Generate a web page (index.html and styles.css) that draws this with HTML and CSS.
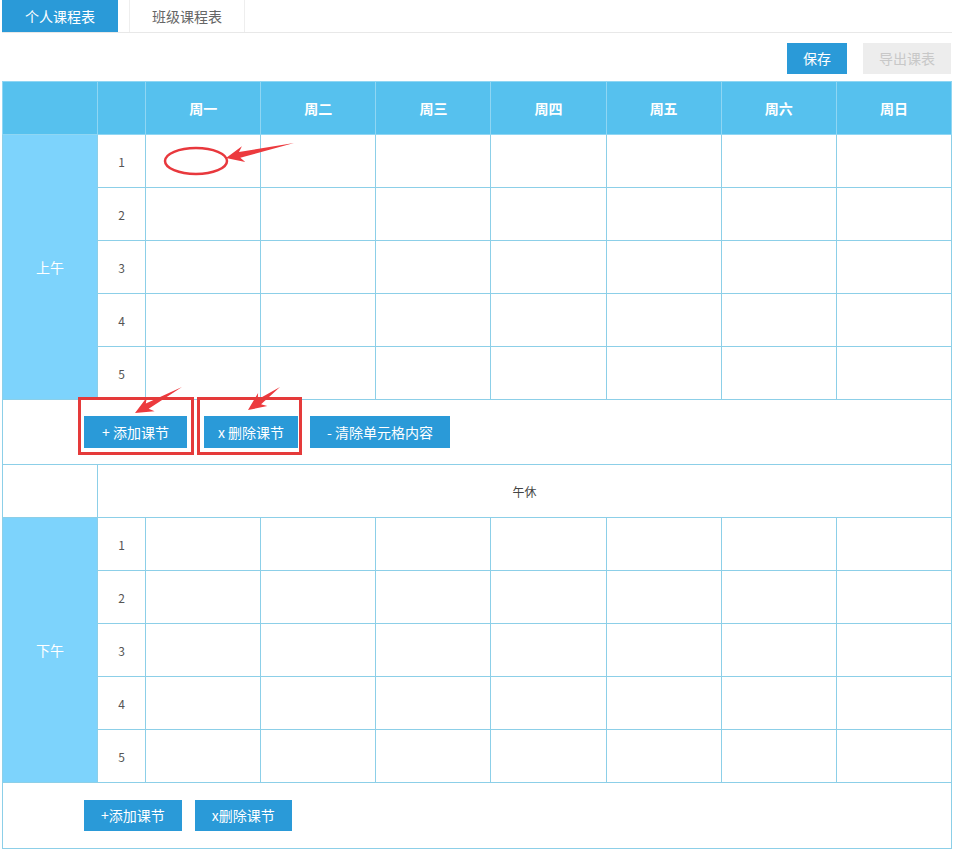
FILE: index.html
```html
<!doctype html>
<html lang="zh-CN">
<head>
    <meta charset="UTF-8">
    <title>课程表</title>
    <link rel="stylesheet" href="styles.css">
</head>
<body>
<div class="page">
    <!--选项卡-->
    <ul class="tabs">
        <li class="tab active">个人课程表</li>
        <li class="tab">班级课程表</li>
    </ul>
    <!--工具栏-->
    <div class="toolbar">
        <span class="btn">保存</span>
        <span class="btn disabled">导出课表</span>
    </div>
    <!--课程表-->
    <table class="schedule">
        <colgroup>
            <col class="c-part">
            <col class="c-num">
            <col span="7" class="c-day">
        </colgroup>
        <tr class="head">
            <th></th>
            <th></th>
            <th>周一</th>
            <th>周二</th>
            <th>周三</th>
            <th>周四</th>
            <th>周五</th>
            <th>周六</th>
            <th>周日</th>
        </tr>
        <tr>
            <td class="part" rowspan="5">上午</td>
            <td class="num">1</td>
            <td></td><td></td><td></td><td></td><td></td><td></td><td></td>
        </tr>
        <tr><td class="num">2</td><td></td><td></td><td></td><td></td><td></td><td></td><td></td></tr>
        <tr><td class="num">3</td><td></td><td></td><td></td><td></td><td></td><td></td><td></td></tr>
        <tr><td class="num">4</td><td></td><td></td><td></td><td></td><td></td><td></td><td></td></tr>
        <tr><td class="num">5</td><td></td><td></td><td></td><td></td><td></td><td></td><td></td></tr>
        <tr class="ops">
            <td colspan="9">
                <div class="ops-bar">
                    <span class="btn op op-add">+ 添加课节</span>
                    <span class="btn op op-del">x 删除课节</span>
                    <span class="btn op">- 清除单元格内容</span>
                </div>
            </td>
        </tr>
        <tr class="rest">
            <td></td>
            <td colspan="8">午休</td>
        </tr>
        <tr>
            <td class="part" rowspan="5">下午</td>
            <td class="num">1</td>
            <td></td><td></td><td></td><td></td><td></td><td></td><td></td>
        </tr>
        <tr><td class="num">2</td><td></td><td></td><td></td><td></td><td></td><td></td><td></td></tr>
        <tr><td class="num">3</td><td></td><td></td><td></td><td></td><td></td><td></td><td></td></tr>
        <tr><td class="num">4</td><td></td><td></td><td></td><td></td><td></td><td></td><td></td></tr>
        <tr><td class="num">5</td><td></td><td></td><td></td><td></td><td></td><td></td><td></td></tr>
        <tr class="ops ops-last">
            <td colspan="9">
                <div class="ops-bar">
                    <span class="btn op2">+添加课节</span>
                    <span class="btn op2">x删除课节</span>
                </div>
            </td>
        </tr>
    </table>
    <!--标注-->
    <svg class="marks" width="956" height="856" viewBox="0 0 956 856">
        <ellipse cx="196" cy="161" rx="31" ry="13" fill="none" stroke="#e8383d" stroke-width="2.5"/>
        <polygon fill="#ec3a3e" points="226,158 241.9,146.3 239,152 294,143 240.3,157.8 245.3,161.9"/>
        <polygon fill="#ec3a3e" points="135,413 146.9,397.3 145.8,403.6 182,387 148.7,408.8 154.6,411.3"/>
        <polygon fill="#ec3a3e" points="248,410 258.1,393.1 257.7,399.5 280,387 261.1,404.3 267.3,406.1"/>
        <rect x="79.5" y="398.5" width="113" height="55" fill="none" stroke="#e53a3a" stroke-width="3"/>
        <rect x="198.5" y="398.5" width="102" height="55" fill="none" stroke="#e53a3a" stroke-width="3"/>
    </svg>
</div>
</body>
</html>
```

FILE: styles.css
```css
* {
    margin: 0;
    padding: 0;
}

body {
    font-family: "Noto Sans CJK SC", "Liberation Sans", sans-serif;
    color: #333;
    background-color: #fff;
}

.page {
    position: relative;
    width: 950px;
    padding: 0 2px;
}

.tabs {
    list-style: none;
    display: flex;
    gap: 11px;
    height: 32px;
    border-bottom: 1px solid #e8e8e8;
}

.tab {
    width: 116px;
    height: 32px;
    line-height: 32px;
    text-align: center;
    font-size: 14px;
    color: #666;
    box-sizing: border-box;
    border-left: 1px solid #eee;
    border-right: 1px solid #eee;
}

.tab.active {
    background-color: #2a9ad8;
    color: #fff;
    border: none;
}

.toolbar {
    display: flex;
    justify-content: flex-end;
    gap: 16px;
    padding: 10px 1px 7px 0;
}

.btn {
    display: inline-block;
    height: 31px;
    line-height: 31px;
    padding: 0 16px;
    font-size: 14px;
    color: #fff;
    background-color: #2a9ad8;
    cursor: pointer;
    white-space: nowrap;
}

.btn.disabled {
    background-color: #ededed;
    color: #c8c8c8;
}

.schedule {
    width: 950px;
    table-layout: fixed;
    border-collapse: collapse;
    border: 1px solid #8ccfe8;
}

.c-part {
    width: 95px;
}

.c-num {
    width: 48px;
}

.c-day {
    width: 115px;
}

.schedule th,
.schedule td {
    border: 1px solid #8ccfe8;
    height: 52px;
    text-align: center;
    font-size: 12px;
    color: #555;
}

.schedule .head th {
    background-color: #56c1ee;
    border-color: #8fd6f3;
    color: #fff;
    font-size: 14px;
    font-weight: bold;
}

.schedule td.part {
    background-color: #7dd3fc;
    color: #fff;
    font-size: 14px;
}

.schedule .rest td {
    color: #444;
}

.schedule .ops td {
    height: 64px;
    text-align: left;
}

.schedule .ops-last td {
    height: 65px;
}

.ops-bar {
    display: flex;
    align-items: center;
    padding-left: 81px;
}

.op {
    height: 32px;
    line-height: 32px;
    padding: 0 17px;
    margin-right: 12px;
}

.op-add {
    padding: 0 18px;
    margin-right: 17px;
}

.op-del {
    padding: 0 14px;
}

.op2 {
    padding: 0 17px;
    margin-right: 13px;
}

.marks {
    position: absolute;
    left: 0;
    top: 0;
    pointer-events: none;
}
```
